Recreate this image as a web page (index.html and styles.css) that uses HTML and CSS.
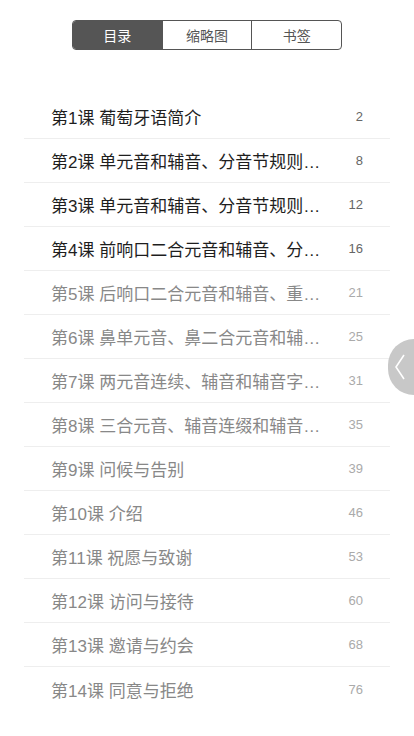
FILE: index.html
```html
<!DOCTYPE html>
<html lang="zh-CN">
<head>
    <meta charset="UTF-8">
    <meta name="viewport" content="width=device-width, initial-scale=1.0">
    <title>目录</title>
    <link rel="stylesheet" href="styles.css">
</head>
<body>
    <div class="tabs">
        <div class="tab on">目录</div>
        <div class="tab">缩略图</div>
        <div class="tab">书签</div>
    </div>

    <ul class="toc">
        <li><span class="title">第1课 葡萄牙语简介</span><span class="page">2</span></li>
        <li><span class="title">第2课 单元音和辅音、分音节规则和重音规则（一）</span><span class="page">8</span></li>
        <li><span class="title">第3课 单元音和辅音、分音节规则和重音规则（二）</span><span class="page">12</span></li>
        <li><span class="title">第4课 前响口二合元音和辅音、分音节规则</span><span class="page">16</span></li>
        <li class="dim"><span class="title">第5课 后响口二合元音和辅音、重音规则</span><span class="page">21</span></li>
        <li class="dim"><span class="title">第6课 鼻单元音、鼻二合元音和辅音连缀</span><span class="page">25</span></li>
        <li class="dim"><span class="title">第7课 两元音连续、辅音和辅音字母组合</span><span class="page">31</span></li>
        <li class="dim"><span class="title">第8课 三合元音、辅音连缀和辅音字母组合</span><span class="page">35</span></li>
        <li class="dim"><span class="title">第9课 问候与告别</span><span class="page">39</span></li>
        <li class="dim"><span class="title">第10课 介绍</span><span class="page">46</span></li>
        <li class="dim"><span class="title">第11课 祝愿与致谢</span><span class="page">53</span></li>
        <li class="dim"><span class="title">第12课 访问与接待</span><span class="page">60</span></li>
        <li class="dim"><span class="title">第13课 邀请与约会</span><span class="page">68</span></li>
        <li class="dim"><span class="title">第14课 同意与拒绝</span><span class="page">76</span></li>
    </ul>

    <div class="handle">
        <svg width="10" height="26" viewBox="0 0 10 26"><polyline points="9,1 1,13 9,25" fill="none" stroke="#fff" stroke-width="1.6"/></svg>
    </div>
</body>
</html>
```

FILE: styles.css
```css
*{
    padding: 0px;
    margin: 0px;
    box-sizing: border-box;
}
body{
    background: #fff;
    font-family: "Liberation Sans", "Noto Sans CJK SC", sans-serif;
    width: 414px;
    height: 736px;
    overflow: hidden;
}
.tabs{
    display: flex;
    width: 270px;
    height: 30px;
    margin: 20px auto 0;
    border: 1px solid #555;
    border-radius: 4px;
    overflow: hidden;
}
.tab{
    flex: 1;
    display: flex;
    align-items: center;
    justify-content: center;
    font-size: 14px;
    color: #555;
    border-left: 1px solid #555;
}
.tab:first-child{
    border-left: none;
}
.tab.on{
    background: #555;
    color: #fff;
}
.toc{
    list-style: none;
    margin: 45px 24px 0;
}
.toc li{
    display: flex;
    align-items: center;
    height: 44px;
    padding: 0 27px;
    border-bottom: 1px solid #eee;
}
.toc li:last-child{
    border-bottom: none;
}
.title{
    flex: 1;
    font-size: 17px;
    color: #1e1e1e;
    white-space: nowrap;
    overflow: hidden;
    text-overflow: ellipsis;
}
.page{
    width: 40px;
    text-align: right;
    font-size: 13px;
    color: #666;
}
.dim .title{
    color: #888;
}
.dim .page{
    color: #aaa;
}
.handle{
    position: absolute;
    right: 0;
    top: 339px;
    width: 26px;
    height: 56px;
    background: #c8c8c8;
    border-radius: 28px 0 0 28px;
    display: flex;
    align-items: center;
    padding-left: 7px;
}
```
